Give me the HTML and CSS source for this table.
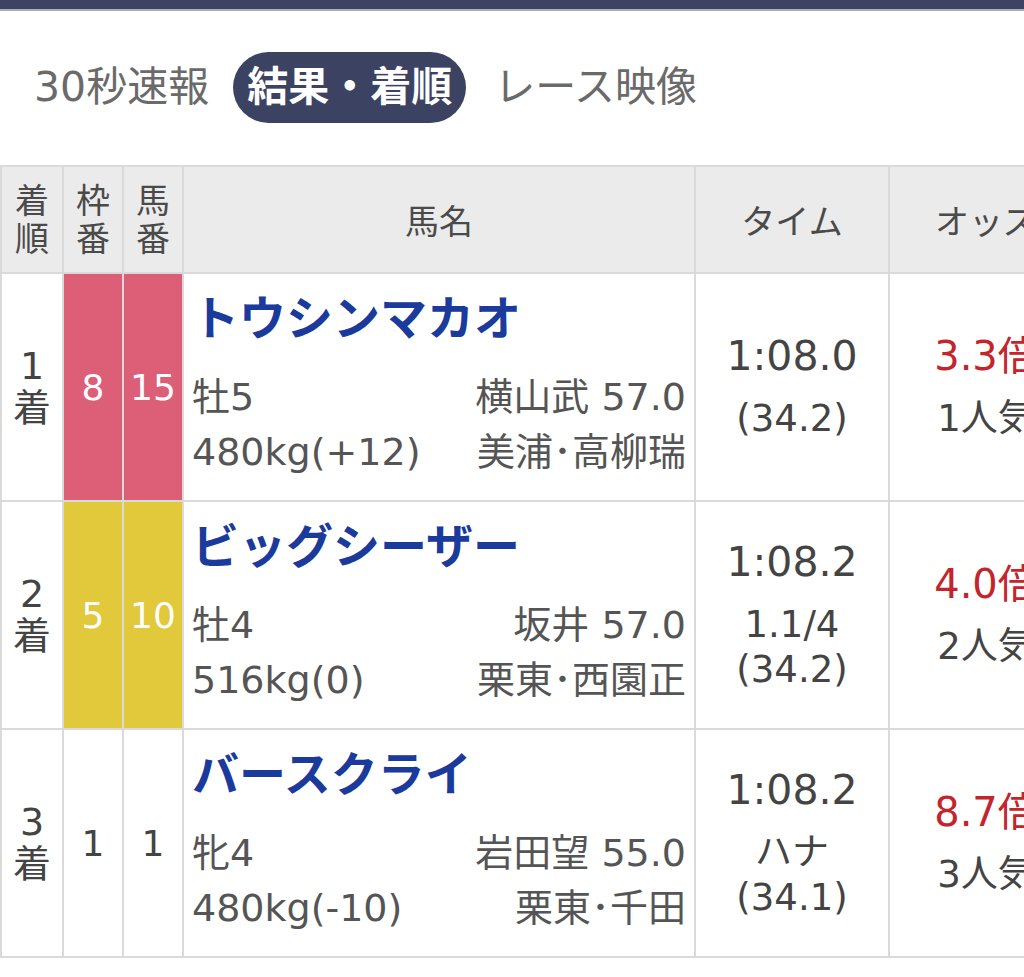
FILE: index.html
```html
<!DOCTYPE html>
<html lang="ja">
<head>
<meta charset="utf-8">
<link rel="stylesheet" href="styles.css">
</head>
<body>
<div class="topbar"></div>
<nav class="tabs">
  <span class="tab">30秒速報</span>
  <span class="tab tab-active">結果・着順</span>
  <span class="tab">レース映像</span>
</nav>
<table class="result">
  <colgroup>
    <col class="c-rank"><col class="c-waku"><col class="c-uma"><col class="c-name"><col class="c-time"><col class="c-odds">
  </colgroup>
  <thead>
    <tr>
      <th class="th-narrow">着<br>順</th>
      <th class="th-narrow">枠<br>番</th>
      <th class="th-narrow">馬<br>番</th>
      <th>馬名</th>
      <th>タイム</th>
      <th>オッズ</th>
    </tr>
  </thead>
  <tbody>
    <tr>
      <td class="rank">1<br>着</td>
      <td class="num waku-8">8</td>
      <td class="num waku-8">15</td>
      <td class="horse">
        <div class="horse-name">トウシンマカオ</div>
        <div class="info"><span>牡5</span><span>横山武 57.0</span></div>
        <div class="info"><span>480kg(+12)</span><span>美浦･高柳瑞</span></div>
      </td>
      <td class="time"><div class="t-main">1:08.0</div><div>(34.2)</div></td>
      <td class="odds"><div class="o-main">3.3倍</div><div>1人気</div></td>
    </tr>
    <tr>
      <td class="rank">2<br>着</td>
      <td class="num waku-5">5</td>
      <td class="num waku-5">10</td>
      <td class="horse">
        <div class="horse-name">ビッグシーザー</div>
        <div class="info"><span>牡4</span><span>坂井 57.0</span></div>
        <div class="info"><span>516kg(0)</span><span>栗東･西園正</span></div>
      </td>
      <td class="time"><div class="t-main">1:08.2</div><div>1.1/4</div><div>(34.2)</div></td>
      <td class="odds"><div class="o-main">4.0倍</div><div>2人気</div></td>
    </tr>
    <tr>
      <td class="rank">3<br>着</td>
      <td class="num num-plain">1</td>
      <td class="num num-plain">1</td>
      <td class="horse">
        <div class="horse-name">バースクライ</div>
        <div class="info"><span>牝4</span><span>岩田望 55.0</span></div>
        <div class="info"><span>480kg(-10)</span><span>栗東･千田</span></div>
      </td>
      <td class="time"><div class="t-main">1:08.2</div><div>ハナ</div><div>(34.1)</div></td>
      <td class="odds"><div class="o-main">8.7倍</div><div>3人気</div></td>
    </tr>
  </tbody>
</table>
</body>
</html>
```
FILE: styles.css
```css
html, body {
  margin: 0;
  padding: 0;
  overflow: hidden;
  background: #ffffff;
}
body {
  font-family: "DejaVu Sans", "Noto Sans CJK JP", sans-serif;
  color: #444;
  width: 1024px;
}
.topbar {
  height: 9px;
  background: #3c4363;
  border-bottom: 2px solid #a9adbf;
}
.tabs {
  display: flex;
  align-items: center;
  gap: 24px;
  padding: 41px 0 0 34px;
  height: 71px;
}
.tab {
  font-size: 41px;
  color: #6a6a6a;
  line-height: 71px;
  white-space: nowrap;
}
.tab + .tab-active + .tab {
  margin-left: 4px;
}
.tab-active {
  background: #3b4262;
  color: #ffffff;
  font-weight: bold;
  border-radius: 36px;
  padding: 0 14px;
}
.result {
  margin-top: 42px;
  border-collapse: collapse;
  table-layout: fixed;
  width: 1082px;
}
.c-rank { width: 62px; }
.c-waku, .c-uma { width: 60px; }
.c-name { width: 512px; }
.c-time, .c-odds { width: 194px; }
.result th, .result td {
  border: 2px solid #dadada;
  padding: 0;
}
.result th {
  background: #ebebeb;
  height: 105px;
  font-weight: normal;
  font-size: 34px;
  color: #4a4a4a;
  text-align: center;
  vertical-align: middle;
}
.result th.th-narrow {
  line-height: 38px;
}
.result td {
  height: 226px;
  text-align: center;
  vertical-align: middle;
}
.rank {
  font-size: 38px;
  line-height: 42px;
  color: #444;
}
.num {
  font-size: 36px;
  color: #ffffff;
}
.num-plain { color: #444; }
.waku-8 { background: #dd5e77; }
.waku-5 { background: #e2c83b; }
.result td.horse {
  text-align: left;
  vertical-align: top;
  height: 212px;
  padding: 14px 8px 0 8px;
}
.horse-name {
  font-size: 47px;
  font-weight: bold;
  color: #1a3a9c;
  line-height: 62px;
  margin-bottom: 20px;
  white-space: nowrap;
}
.info {
  display: flex;
  justify-content: space-between;
  font-size: 38px;
  line-height: 55px;
  color: #555;
  white-space: nowrap;
}
.time, .odds {
  font-size: 37px;
  line-height: 45px;
  color: #444;
}
.t-main {
  font-size: 41px;
  line-height: 46px;
  margin-bottom: 17px;
}
.o-main {
  font-size: 40px;
  line-height: 46px;
  margin-bottom: 17px;
  color: #c4242c;
}
```
